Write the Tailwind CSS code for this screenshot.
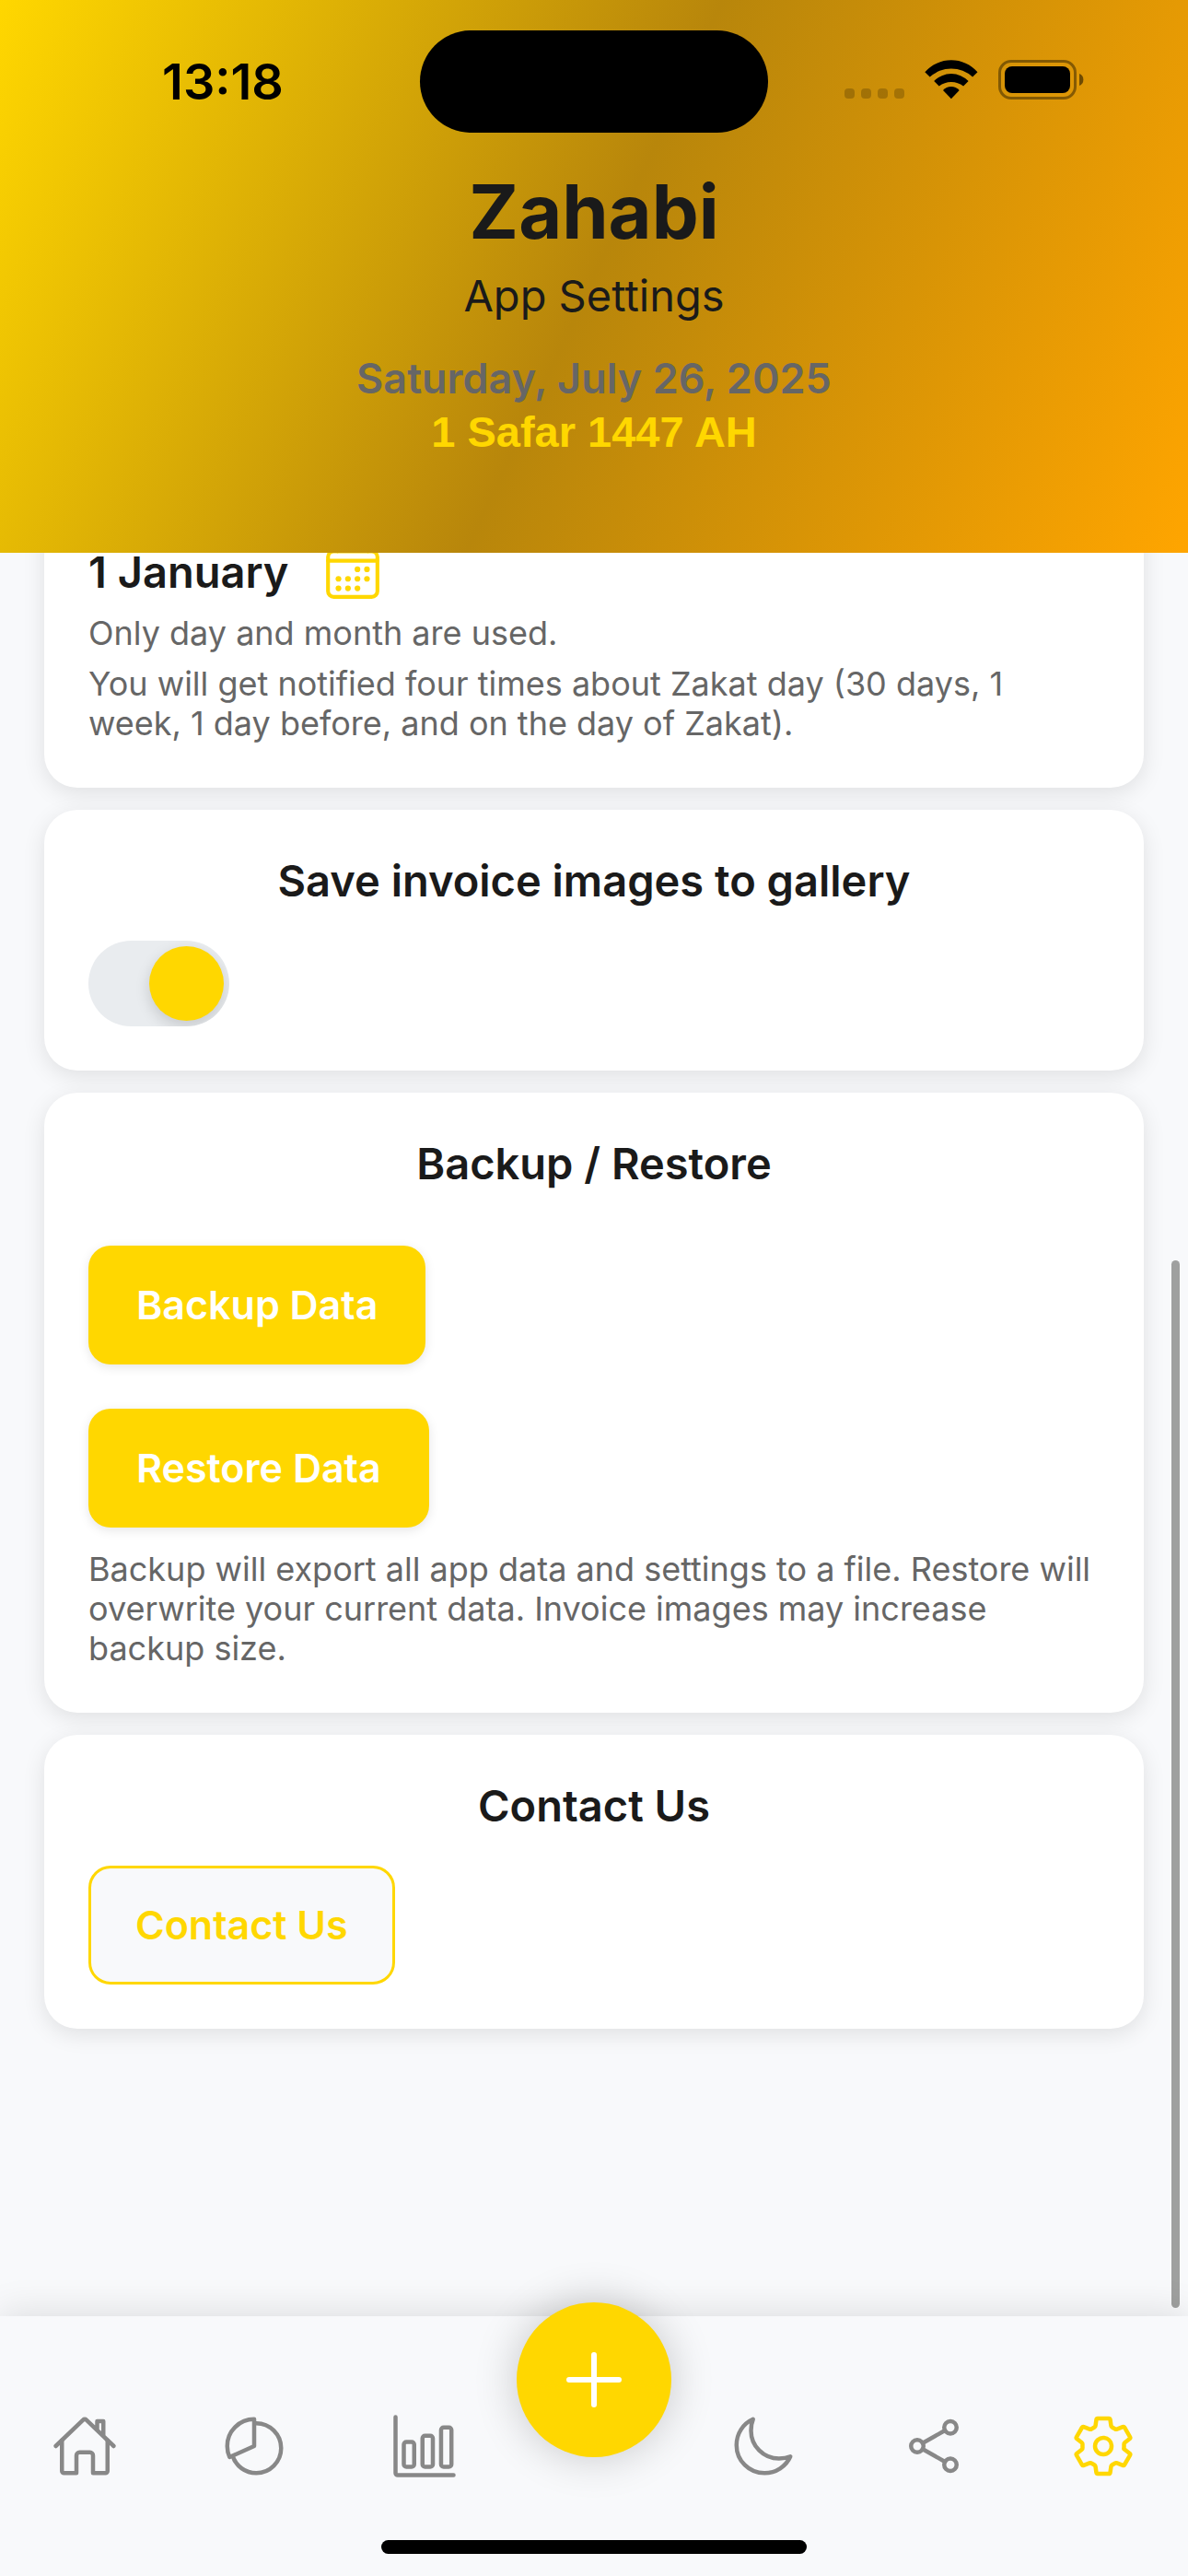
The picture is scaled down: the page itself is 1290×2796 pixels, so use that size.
<!DOCTYPE html>
<html lang="en">
<head>
    <meta charset="UTF-8">
    <meta name="viewport" content="width=device-width, initial-scale=1.0">
    <title>Zahabi - App Settings</title>
    <script src="https://cdn.jsdelivr.net/npm/@tailwindcss/browser@4"></script>
</head>
<body class="relative min-h-screen flex flex-col overflow-x-hidden bg-[#f8f9fb] font-['Inter','Liberation_Sans',sans-serif] text-[#1a1a1a]">

    <!-- Header -->
    <header class="relative z-10 h-[600px] bg-[linear-gradient(115deg,#ffd700,#b8860b,#ffa500)] text-center">
        <div class="grid grid-cols-[1fr_378px_1fr] items-center pt-[33px] text-black">
            <div class="pl-7 text-[54px] leading-[60px] font-semibold">13:18</div>
            <div class="h-[111px] rounded-full bg-black"></div>
            <div class="flex items-end justify-end gap-[22px] pr-[113px] pb-1">
                <svg class="w-[65px] h-[43px]" viewBox="0 0 65 43" fill="#000" fill-opacity=".2" aria-hidden="true">
                    <rect x="0" y="31" width="11" height="11" rx="4"/>
                    <rect x="18" y="31" width="11" height="11" rx="4"/>
                    <rect x="36" y="31" width="11" height="11" rx="4"/>
                    <rect x="54" y="31" width="11" height="11" rx="4"/>
                </svg>
                <svg class="w-[58px] h-[43px]" viewBox="0 0 58 43" aria-hidden="true">
                    <path d="M0.3 13.3A38 38 0 0 1 57.5 13.3L52.1 18.6A34 34 0 0 0 5.7 18.6z"/>
                    <path d="M10.2 23A26 26 0 0 1 47.6 23L42.1 28.6A21.6 21.6 0 0 0 15.7 28.6z"/>
                    <path d="M20 33A12 12 0 0 1 37.7 33L28.9 42.2z"/>
                </svg>
                <svg class="w-[93px] h-[43px]" viewBox="0 0 93 43" aria-hidden="true">
                    <rect x="1.5" y="1.5" width="82" height="40" rx="12.5" fill="none" stroke="#000" stroke-opacity=".4" stroke-width="3"/>
                    <rect x="7" y="7" width="71" height="29" rx="8"/>
                    <path d="M88 15a7 7 0 0 1 0 13z" fill-opacity=".5"/>
                </svg>
            </div>
        </div>
        <h1 class="mt-9 text-[81px] leading-[100px] font-bold">Zahabi</h1>
        <p class="mt-3 text-[47px] leading-[58px]">App Settings</p>
        <div class="mt-8 text-[45px] leading-[58px] font-semibold">
            <p class="text-[#666666]">Saturday, July 26, 2025</p>
            <p class="font-['Liberation_Sans',sans-serif] text-[47px] font-bold text-[#ffd700]">1 Safar 1447 AH</p>
        </div>
    </header>

    <!-- Settings -->
    <main class="flex-1 flex flex-col gap-6 px-12 -mt-15 pb-[312px]">
        <section class="bg-white rounded-[36px] p-12 shadow-[0_6px_24px_rgba(0,0,0,0.1)]">
            <div class="flex items-center gap-9">
                <span class="text-[47px] leading-[58px] font-semibold">1 January</span>
                <button type="button" aria-label="Pick Zakat date" class="text-[#ffd700]">
                    <svg class="size-[66px]" viewBox="0 0 512 512" fill="none" stroke="currentColor" stroke-width="32" stroke-linecap="round" stroke-linejoin="round">
                        <rect x="48" y="80" width="416" height="384" rx="48"/>
                        <path d="M128 48v32M384 48v32M464 160H48"/>
                        <g fill="currentColor" stroke="none">
                            <circle cx="296" cy="232" r="24"/>
                            <circle cx="376" cy="232" r="24"/>
                            <circle cx="136" cy="312" r="24"/>
                            <circle cx="216" cy="312" r="24"/>
                            <circle cx="296" cy="312" r="24"/>
                            <circle cx="376" cy="312" r="24"/>
                            <circle cx="136" cy="392" r="24"/>
                            <circle cx="216" cy="392" r="24"/>
                            <circle cx="296" cy="392" r="24"/>
                        </g>
                    </svg>
                </button>
            </div>
            <p class="mt-3 text-[36px] leading-[43px] text-[#666666]">Only day and month are used.</p>
            <p class="mt-3 text-[36px] leading-[43px] text-[#666666]">You will get notified four times about Zakat day (30 days, 1 week, 1 day before, and on the day of Zakat).</p>
        </section>

        <section class="bg-white rounded-[36px] p-12 shadow-[0_6px_24px_rgba(0,0,0,0.1)]">
            <h2 id="galleryTitle" class="mb-9 text-center text-[47px] leading-[58px] font-semibold">Save invoice images to gallery</h2>
            <label class="relative block w-[153px] h-[93px] rounded-full bg-[#e9ecef] overflow-hidden">
                <input type="checkbox" role="switch" aria-labelledby="galleryTitle" checked class="peer sr-only">
                <span class="absolute top-[6px] left-[6px] size-[81px] rounded-full bg-white shadow-[0_6px_16px_rgba(0,0,0,0.15)] peer-checked:left-[66px] peer-checked:bg-[#ffd700]"></span>
            </label>
        </section>

        <section class="bg-white rounded-[36px] p-12 shadow-[0_6px_24px_rgba(0,0,0,0.1)]">
            <h2 class="mb-15 text-center text-[47px] leading-[58px] font-semibold">Backup / Restore</h2>
            <div class="flex flex-col items-start gap-12">
                <button type="button" class="h-[129px] px-13 rounded-3xl bg-[#ffd700] text-white text-[43px] font-semibold shadow-[0_3px_12px_rgba(0,0,0,0.1)]">Backup Data</button>
                <button type="button" class="h-[129px] px-13 rounded-3xl bg-[#ffd700] text-white text-[43px] font-semibold shadow-[0_3px_12px_rgba(0,0,0,0.1)]">Restore Data</button>
            </div>
            <p class="mt-6 text-[36px] leading-[43px] text-[#666666]">Backup will export all app data and settings to a file. Restore will overwrite your current data. Invoice images may increase backup size.</p>
        </section>

        <section class="bg-white rounded-[36px] p-12 shadow-[0_6px_24px_rgba(0,0,0,0.1)]">
            <h2 class="mb-9 text-center text-[47px] leading-[58px] font-semibold">Contact Us</h2>
            <button type="button" class="block h-[129px] px-12 rounded-3xl border-3 border-[#ffd700] bg-[#f8f9fb] text-[#ffd700] text-[43px] font-semibold">Contact Us</button>
        </section>
    </main>

    <!-- Scroll indicator -->
    <div class="absolute right-[9px] bottom-[291px] w-[9px] h-[1137px] rounded-full bg-[#9fa09f]"></div>

    <!-- Bottom tabs -->
    <nav class="relative h-[282px] grid grid-cols-7 items-center justify-items-center bg-[#f8f9fb] text-[#888888] shadow-[0_-6px_36px_rgba(0,0,0,0.1)]">
        <a href="#home" aria-label="Home">
            <svg class="size-[72px]" viewBox="0 0 512 512" fill="none" stroke="currentColor" stroke-width="32" stroke-linecap="round" stroke-linejoin="round">
                <path d="M80 212v236a16 16 0 0016 16h96V328a24 24 0 0124-24h80a24 24 0 0124 24v136h96a16 16 0 0016-16V212"/>
                <path d="M480 256L266.89 52c-5-5.28-16.69-5.34-21.78 0L32 256M400 179V64h-48v69"/>
            </svg>
        </a>
        <a href="#portfolio" aria-label="Portfolio">
            <svg class="size-[72px]" viewBox="0 0 512 512" fill="none" stroke="currentColor" stroke-width="32">
                <path d="M256.05 80.65Q263.94 80 272 80c106 0 192 86 192 192s-86 192-192 192A192.09 192.09 0 0189.12 330.65"/>
                <path d="M256 48C141.12 48 48 141.12 48 256a207.29 207.29 0 0018.09 85L256 256z" stroke-linecap="round" stroke-linejoin="round"/>
            </svg>
        </a>
        <a href="#charts" aria-label="Charts">
            <svg class="size-[72px]" viewBox="0 0 512 512" fill="none" stroke="currentColor" stroke-width="32" stroke-linecap="round" stroke-linejoin="round">
                <path d="M32 32v432a16 16 0 0016 16h432"/>
                <rect x="96" y="224" width="80" height="192" rx="20"/>
                <rect x="240" y="176" width="80" height="240" rx="20"/>
                <rect x="383.64" y="112" width="80" height="304" rx="20"/>
            </svg>
        </a>
        <button type="button" aria-label="Add" class="absolute -top-[15px] left-1/2 -translate-x-1/2 size-[168px] flex items-center justify-center rounded-full bg-[#ffd700] text-white shadow-[0_0_48px_rgba(0,0,0,0.2)]">
            <svg class="size-24" viewBox="0 0 512 512" fill="none" stroke="currentColor" stroke-width="32" stroke-linecap="round">
                <path d="M256 112v288M400 256H112"/>
            </svg>
        </button>
        <a href="#theme" aria-label="Dark mode" class="col-start-5">
            <svg class="size-[72px]" viewBox="0 0 512 512" fill="none" stroke="currentColor" stroke-width="32" stroke-linecap="round" stroke-linejoin="round">
                <path d="M160 136c0-30.62 4.51-61.61 16-88C99.57 81.27 48 159.32 48 248c0 119.29 96.71 216 216 216 88.68 0 166.73-51.57 200-128-26.39 11.49-57.38 16-88 16-119.29 0-216-96.71-216-216z"/>
            </svg>
        </a>
        <a href="#share" aria-label="Share">
            <svg class="size-[72px]" viewBox="0 0 512 512" fill="none" stroke="currentColor" stroke-width="32" stroke-linecap="round" stroke-linejoin="round">
                <circle cx="128" cy="256" r="48"/>
                <circle cx="384" cy="112" r="48"/>
                <circle cx="384" cy="400" r="48"/>
                <path d="M169.83 279.53l172.34 96.94M342.17 135.53l-172.34 96.94"/>
            </svg>
        </a>
        <a href="#settings" aria-label="Settings" aria-current="page" class="text-[#ffd700]">
            <svg class="size-[72px]" viewBox="0 0 512 512" fill="none" stroke="currentColor" stroke-width="32" stroke-linecap="round" stroke-linejoin="round">
                <path d="M262.29 192.31a64 64 0 1057.4 57.4 64.13 64.13 0 00-57.4-57.4zM416.39 256a154.34 154.34 0 01-1.53 20.79l45.21 35.46a10.81 10.81 0 012.45 13.75l-42.77 74a10.81 10.81 0 01-13.14 4.59l-44.9-18.08a16.11 16.11 0 00-15.17 1.75A164.48 164.48 0 01325 400.8a15.94 15.94 0 00-8.82 12.14l-6.73 47.89a11.08 11.08 0 01-10.68 9.17h-85.54a11.11 11.11 0 01-10.69-8.87l-6.72-47.82a16.07 16.07 0 00-9-12.22 155.3 155.3 0 01-21.46-12.57 16 16 0 00-15.11-1.71l-44.89 18.07a10.81 10.81 0 01-13.14-4.58l-42.77-74a10.8 10.8 0 012.45-13.75l38.21-30a16.05 16.05 0 006-14.08c-.36-4.17-.58-8.33-.58-12.5s.21-8.27.58-12.35a16 16 0 00-6.07-13.94l-38.19-30A10.81 10.81 0 0149.48 186l42.77-74a10.81 10.81 0 0113.14-4.59l44.9 18.08a16.11 16.11 0 0015.17-1.75A164.48 164.48 0 01187 111.2a15.94 15.94 0 008.82-12.14l6.73-47.89A11.08 11.08 0 01213.23 42h85.54a11.11 11.11 0 0110.69 8.87l6.72 47.82a16.07 16.07 0 009 12.22 155.3 155.3 0 0121.46 12.57 16 16 0 0015.11 1.71l44.89-18.07a10.81 10.81 0 0113.14 4.58l42.77 74a10.8 10.8 0 01-2.45 13.75l-38.21 30a16.05 16.05 0 00-6.05 14.08c.33 4.14.55 8.3.55 12.47z"/>
            </svg>
        </a>
        <div class="absolute bottom-6 left-1/2 -translate-x-1/2 w-[462px] h-[15px] rounded-full bg-black"></div>
    </nav>
</body>
</html>
